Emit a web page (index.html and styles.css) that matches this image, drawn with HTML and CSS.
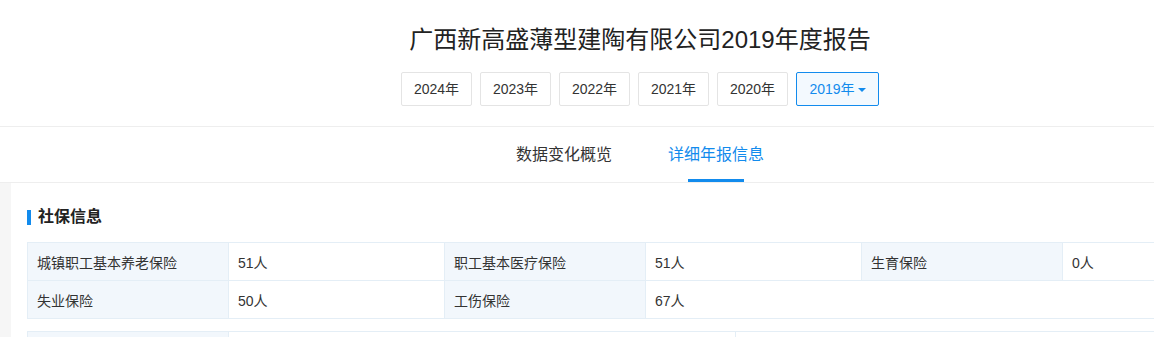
FILE: index.html
```html
<!DOCTYPE html>
<html lang="zh-CN">
<head>
    <meta charset="UTF-8">
    <title>广西新高盛薄型建陶有限公司2019年度报告</title>
    <link rel="stylesheet" href="styles.css">
</head>
<body>
<div class="page">

    <div class="report-head">
        <h1 class="report-title">广西新高盛薄型建陶有限公司2019年度报告</h1>
        <div class="year-list">
            <a class="year-btn">2024年</a>
            <a class="year-btn">2023年</a>
            <a class="year-btn">2022年</a>
            <a class="year-btn">2021年</a>
            <a class="year-btn">2020年</a>
            <a class="year-btn active">2019年<span class="caret"></span></a>
        </div>
    </div>

    <div class="tabs">
        <a class="tab">数据变化概览</a>
        <a class="tab active">详细年报信息</a>
    </div>

    <div class="main">
        <div class="card">
            <div class="section-title">社保信息</div>
            <table class="ntable">
                <colgroup>
                    <col class="c-label"><col class="c-value">
                    <col class="c-label"><col class="c-value">
                    <col class="c-label"><col class="c-value">
                </colgroup>
                <tr>
                    <td class="tb">城镇职工基本养老保险</td>
                    <td>51人</td>
                    <td class="tb">职工基本医疗保险</td>
                    <td>51人</td>
                    <td class="tb">生育保险</td>
                    <td>0人</td>
                </tr>
                <tr>
                    <td class="tb">失业保险</td>
                    <td>50人</td>
                    <td class="tb">工伤保险</td>
                    <td colspan="3">67人</td>
                </tr>
            </table>

            <table class="ntable next">
                <colgroup>
                    <col class="c-label"><col class="c-wide"><col>
                </colgroup>
                <tr>
                    <td class="tb">单位缴费基数</td>
                    <td>企业选择不公示</td>
                    <td>企业选择不公示</td>
                </tr>
            </table>
        </div>
    </div>

</div>
</body>
</html>
```

FILE: styles.css
```css
body {
    margin: 0;
    overflow: hidden;
    font-family: "Liberation Sans", "Noto Sans CJK SC", sans-serif;
    color: #333;
    background-color: #fff;
}
.page {
    width: 1280px;
}
.report-head {
    padding: 24px 0 20px;
    text-align: center;
    border-bottom: 1px solid #eee;
}
.report-title {
    margin: 0;
    font-size: 24px;
    line-height: 32px;
    font-weight: normal;
    color: #222;
}
.year-list {
    display: flex;
    justify-content: center;
    gap: 8px;
    margin-top: 16px;
}
.year-btn {
    box-sizing: border-box;
    width: 71px;
    height: 34px;
    line-height: 32px;
    border: 1px solid #e4e4e4;
    border-radius: 2px;
    font-size: 14px;
    color: #333;
    background-color: #fff;
}
.year-btn.active {
    width: 83px;
    border-color: #128bed;
    background-color: #f3f9fe;
    color: #128bed;
}
.caret {
    display: inline-block;
    margin-left: 3px;
    vertical-align: middle;
    border-top: 4px solid #128bed;
    border-left: 4px solid transparent;
    border-right: 4px solid transparent;
}
.tabs {
    display: flex;
    justify-content: center;
    gap: 56px;
    border-bottom: 1px solid #eee;
}
.tab {
    position: relative;
    height: 55px;
    line-height: 55px;
    font-size: 16px;
    color: #333;
}
.tab.active {
    color: #128bed;
}
.tab.active::after {
    content: "";
    position: absolute;
    left: 50%;
    bottom: 0;
    width: 56px;
    margin-left: -28px;
    height: 3px;
    background-color: #128bed;
}
.main {
    background-color: #f6f6f6;
    padding-left: 11px;
}
.card {
    background-color: #fff;
    padding: 23px 16px 16px;
}
.section-title {
    display: flex;
    align-items: center;
    gap: 7px;
    height: 22px;
    margin-bottom: 14px;
    font-size: 16px;
    line-height: 22px;
    font-weight: bold;
    color: #222;
}
.section-title::before {
    content: "";
    width: 4px;
    height: 15px;
    background-color: #128bed;
}
.ntable {
    width: 1251px;
    table-layout: fixed;
    border-collapse: collapse;
    font-size: 14px;
}
.ntable td {
    height: 37px;
    padding: 0 9px;
    border: 1px solid #e4eef6;
    color: #333;
}
.ntable .tb {
    background-color: #f2f7fc;
}
.ntable.next {
    margin-top: 12px;
}
.c-label {
    width: 201px;
}
.c-value {
    width: 216px;
}
.c-wide {
    width: 507px;
}
```
